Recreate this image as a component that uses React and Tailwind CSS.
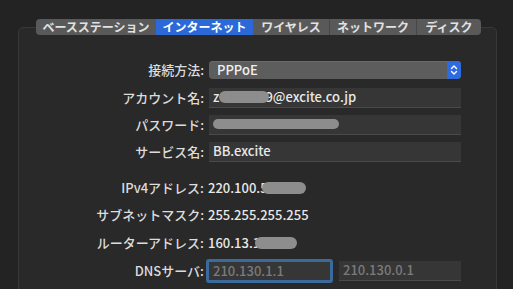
import React from "react";

const font = { fontFamily: '"Noto Sans CJK JP", "Noto Sans", sans-serif' };

const tabs = [
    { label: "ベースステーション", w: "w-[120px]" },
    { label: "インターネット", w: "w-[97px]", active: true },
    { label: "ワイヤレス", w: "w-[76px]" },
    { label: "ネットワーク", w: "w-[87px]" },
    { label: "ディスク", w: "w-[65px]" },
];

function Blob({ className }) {
    return <span className={"inline-block rounded-full bg-[#8d8d8d] " + className} />;
}

function Row({ label, children, className = "" }) {
    return (
        <div className={"flex items-center " + className}>
            <div className="w-[186px] shrink-0 text-right text-[13px] font-medium text-[#dcdcdc] pr-[1px]">{label}</div>
            <div className="ml-[4px] flex-1 min-w-0">{children}</div>
        </div>
    );
}

function Field({ children }) {
    return (
        <div className="h-[20px] bg-[#363636] border-b border-[#4a4a4a] flex items-center px-[4px] text-[13px] font-medium text-[#e8e8e8] whitespace-nowrap overflow-hidden">
            {children}
        </div>
    );
}

export default function App() {
    return (
        <div className="w-[513px] h-[289px] bg-[#232323] overflow-hidden pt-[19px]" style={font}>
            {/* tab bar */}
            <div className="relative z-10 ml-[36px] flex h-[16px] rounded-[4px] overflow-hidden bg-[#595959] w-[445px]">
                {tabs.map((t, i) => (
                    <div
                        key={t.label}
                        className={
                            t.w +
                            " flex items-center justify-center text-[12px] font-semibold leading-none " +
                            (t.active
                                ? "bg-[#2c69d8] text-white"
                                : "text-[#e2e2e2] " + (i > 0 && !tabs[i - 1].active ? "border-l border-[#474747]" : ""))
                        }
                    >
                        {t.label}
                    </div>
                ))}
            </div>

            {/* panel */}
            <div className="-mt-[8px] ml-[18px] w-[479px] h-[300px] rounded-[5px] border border-[#383838] bg-[#292929] pr-[35px] pt-[32px]">
                <Row label="接続方法:">
                    <div className="h-[18px] rounded-[4px] bg-[#5d5d5d] flex items-center justify-between text-[13px] font-medium text-[#f0f0f0] shadow-[inset_0_1px_0_#6a6a6a]">
                        <span className="pl-[8px]">PPPoE</span>
                        <span className="w-[14px] h-[18px] rounded-r-[4px] bg-[#2f6be0] flex items-center justify-center">
                            <svg width="8" height="12" viewBox="0 0 8 12" fill="none" stroke="white" strokeWidth="1.4" strokeLinecap="round" strokeLinejoin="round">
                                <path d="M1.5 4.5 L4 2 L6.5 4.5" />
                                <path d="M1.5 7.5 L4 10 L6.5 7.5" />
                            </svg>
                        </span>
                    </div>
                </Row>

                <Row label="アカウント名:" className="mt-[8px]">
                    <Field>
                        <span>z</span>
                        <Blob className="w-[50px] h-[12px] -mr-[4px] relative z-10" />
                        <span>9@excite.co.jp</span>
                    </Field>
                </Row>

                <Row label="パスワード:" className="mt-[7px]">
                    <Field>
                        <Blob className="w-[126px] h-[10px]" />
                    </Field>
                </Row>

                <Row label="サービス名:" className="mt-[7px]">
                    <Field>BB.excite</Field>
                </Row>

                <Row label="IPv4アドレス:" className="mt-[16px] h-[20px]">
                    <div className="text-[13px] font-medium text-[#e8e8e8] flex items-center -ml-[1px]">
                        <span>220.100.5</span>
                        <Blob className="w-[44px] h-[12px] -ml-[6px]" />
                    </div>
                </Row>

                <Row label="サブネットマスク:" className="mt-[7px] h-[20px]">
                    <div className="text-[13px] font-medium text-[#e8e8e8] -ml-[1px]">255.255.255.255</div>
                </Row>

                <Row label="ルーターアドレス:" className="mt-[8px] h-[20px]">
                    <div className="text-[13px] font-medium text-[#e8e8e8] flex items-center -ml-[1px]">
                        <span>160.13.1</span>
                        <Blob className="w-[42px] h-[12px] -ml-[5px]" />
                    </div>
                </Row>

                <Row label="DNSサーバ:" className="mt-[6px]">
                    <div className="flex items-center gap-[6px] -ml-[3px]">
                        <div className="w-[127px] h-[24px] rounded-[3px] border-[3px] border-[#3a6b9c] bg-[#363636] flex items-center px-[4px] text-[13px] font-medium text-[#7a7a7a]">
                            210.130.1.1
                        </div>
                        <div className="flex-1">
                            <div className="h-[20px] bg-[#363636] border-b border-[#4a4a4a] flex items-center px-[4px] text-[13px] font-medium text-[#7a7a7a]">
                                210.130.0.1
                            </div>
                        </div>
                    </div>
                </Row>
            </div>
        </div>
    );
}
